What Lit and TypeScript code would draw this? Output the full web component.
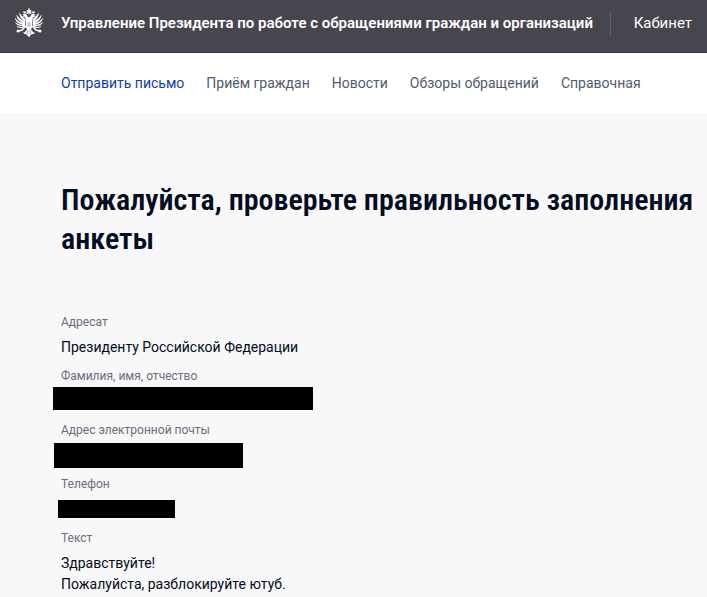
import { LitElement, html, css, svg } from "lit";
import { customElement, property } from "lit/decorators.js";

@customElement("state-emblem")
export class StateEmblem extends LitElement {
  static styles = css`
    :host { display: block; width: 30px; height: 30px; }
    svg { display: block; width: 100%; height: 100%; }
  `;

  private half() {
    return svg`
      <path d="M14 9 L12.6 6.6 L10.6 5.4 L8.4 6.4 L9.8 7.4 L8.6 8.4 L10.8 9 L11.6 11.4 L13 13 L15 13 L15 9 Z" fill="#fff"/>
      <path d="M9 3.4 h3 l-.5 1.6 h-2 Z" fill="#fff"/>
      <path d="M11.4 11.2 C9.6 9.4 7 7.4 5.2 4.6 C5 8 7 11 10.4 13.4 C7 11.6 4 9 2.6 6.4 C2.4 10 5 13 9.4 15 C5.4 14 2.4 12 1 9.4 C1 13 4.4 15.8 9 16.6 C5.6 16.8 2.8 15.8 .8 13.8 C1.8 17 5.4 18.6 9.4 18 C7 19.2 4.4 19 2.4 18 C4.4 20.6 8 20.8 11 18.4 Z" fill="#fff"/>
      <path d="M11.8 18 L8 22 L4.6 23" fill="none" stroke="#fff" stroke-width="1.5"/>
      <circle cx="4" cy="23" r="1.5" fill="#fff"/>
      <path d="M13.4 21 L10.4 24.4 L9 24.2 L10.6 26.2 L12.4 25.8 L12.8 27 L14.4 25 Z" fill="#fff"/>
    `;
  }

  render() {
    return html`<svg viewBox="0 0 30 30" role="img" aria-label="Герб">
      ${this.half()}
      <g transform="matrix(-1 0 0 1 30 0)">${this.half()}</g>
      <path d="M15 .4 v2 M14 1.2 h2 M13 2.4 h4 l-.6 2.4 h-2.8 Z" fill="#fff" stroke="#fff" stroke-width=".8"/>
      <path d="M10.6 4.4 Q15 7.4 19.4 4.4" fill="none" stroke="#fff" stroke-width=".8"/>
      <path d="M11.8 12 h6.4 v7.4 l-1.6 2 l.6 5 l-2.2 2.8 l-2.2 -2.8 l.6 -5 l-1.6 -2 Z" fill="#fff"/>
      <path d="M13.4 14.2 h3.2 v3.6 l-1.6 1.4 l-1.6 -1.4 Z" fill="#c9c8cd"/>
      <path d="M14 22.4 l-.4 3.4 M16 22.4 l.4 3.4" stroke="#47464f" stroke-width=".6"/>
    </svg>`;
  }
}

@customElement("form-field")
export class FormField extends LitElement {
  @property() label = "";
  @property() value = "";
  @property() mask = "";

  static styles = css`
    :host { display: block; }
    dl { margin: 0; display: flex; flex-direction: column; gap: 7px; }
    dt { font-size: 12px; line-height: 16px; color: #6b6d7d; }
    dd { margin: 0; position: relative; min-height: 21px; font-size: 14px; line-height: 21px; white-space: pre-line; }
    .mask { position: absolute; background: #000; }
    .name { left: -8px; top: -4px; width: 260px; height: 23px; }
    .email { left: -7px; top: -2px; width: 189px; height: 25px; }
    .phone { left: -3px; top: 1px; width: 117px; height: 18px; }
  `;

  render() {
    return html`<dl>
      <dt>${this.label}</dt>
      <dd>${this.value}${this.mask ? html`<span class="mask ${this.mask}"></span>` : ""}</dd>
    </dl>`;
  }
}

@customElement("app-root")
export class AppRoot extends LitElement {
  static styles = css`
    :host {
      display: block;
      min-height: 100vh;
      overflow: hidden;
      background: #f8f8f8;
      color: #020c22;
      font-family: Roboto, "Liberation Sans", sans-serif;
    }
    a { text-decoration: none; color: inherit; }
    .top {
      display: flex;
      align-items: center;
      box-sizing: border-box;
      height: 53px;
      padding: 0 15px 6px 14px;
      background: #47464f;
      border-bottom: 1px solid #3d3b45;
      color: #fff;
      font-size: 15px;
      line-height: 20px;
      white-space: nowrap;
    }
    .title { margin-left: 17px; font-weight: 600; }
    .cabinet {
      display: flex;
      align-items: center;
      height: 25px;
      margin-left: auto;
      padding-left: 23px;
      border-left: 1px solid #62616a;
    }
    .nav {
      display: flex;
      align-items: center;
      gap: 22px;
      height: 60px;
      padding-left: 61px;
      background: #fff;
      color: #505a70;
      font-size: 14px;
      line-height: 20px;
      white-space: nowrap;
    }
    .active { color: #0d3cb4; }
    main { padding: 67px 8px 0 61px; }
    h1 {
      margin: 0 0 56px;
      font-family: "Roboto Condensed", "Liberation Sans Narrow", Roboto, sans-serif;
      font-size: 30px;
      line-height: 39px;
      font-weight: 600;
    }
    .fields { display: flex; flex-direction: column; gap: 10px; }
  `;

  render() {
    return html`
      <header class="top">
        <state-emblem></state-emblem>
        <a class="title" href="#">Управление Президента по работе с обращениями граждан и организаций</a>
        <a class="cabinet" href="#">Кабинет</a>
      </header>
      <nav class="nav">
        <a class="active" href="#" aria-current="page">Отправить письмо</a>
        <a href="#">Приём граждан</a>
        <a href="#">Новости</a>
        <a href="#">Обзоры обращений</a>
        <a href="#">Справочная</a>
      </nav>
      <main>
        <h1>Пожалуйста, проверьте правильность заполнения анкеты</h1>
        <section class="fields">
          <form-field label="Адресат" value="Президенту Российской Федерации"></form-field>
          <form-field label="Фамилия, имя, отчество" mask="name"></form-field>
          <form-field label="Адрес электронной почты" mask="email"></form-field>
          <form-field label="Телефон" mask="phone"></form-field>
          <form-field label="Текст" .value=${"Здравствуйте!\nПожалуйста, разблокируйте ютуб."}></form-field>
        </section>
      </main>
    `;
  }
}
